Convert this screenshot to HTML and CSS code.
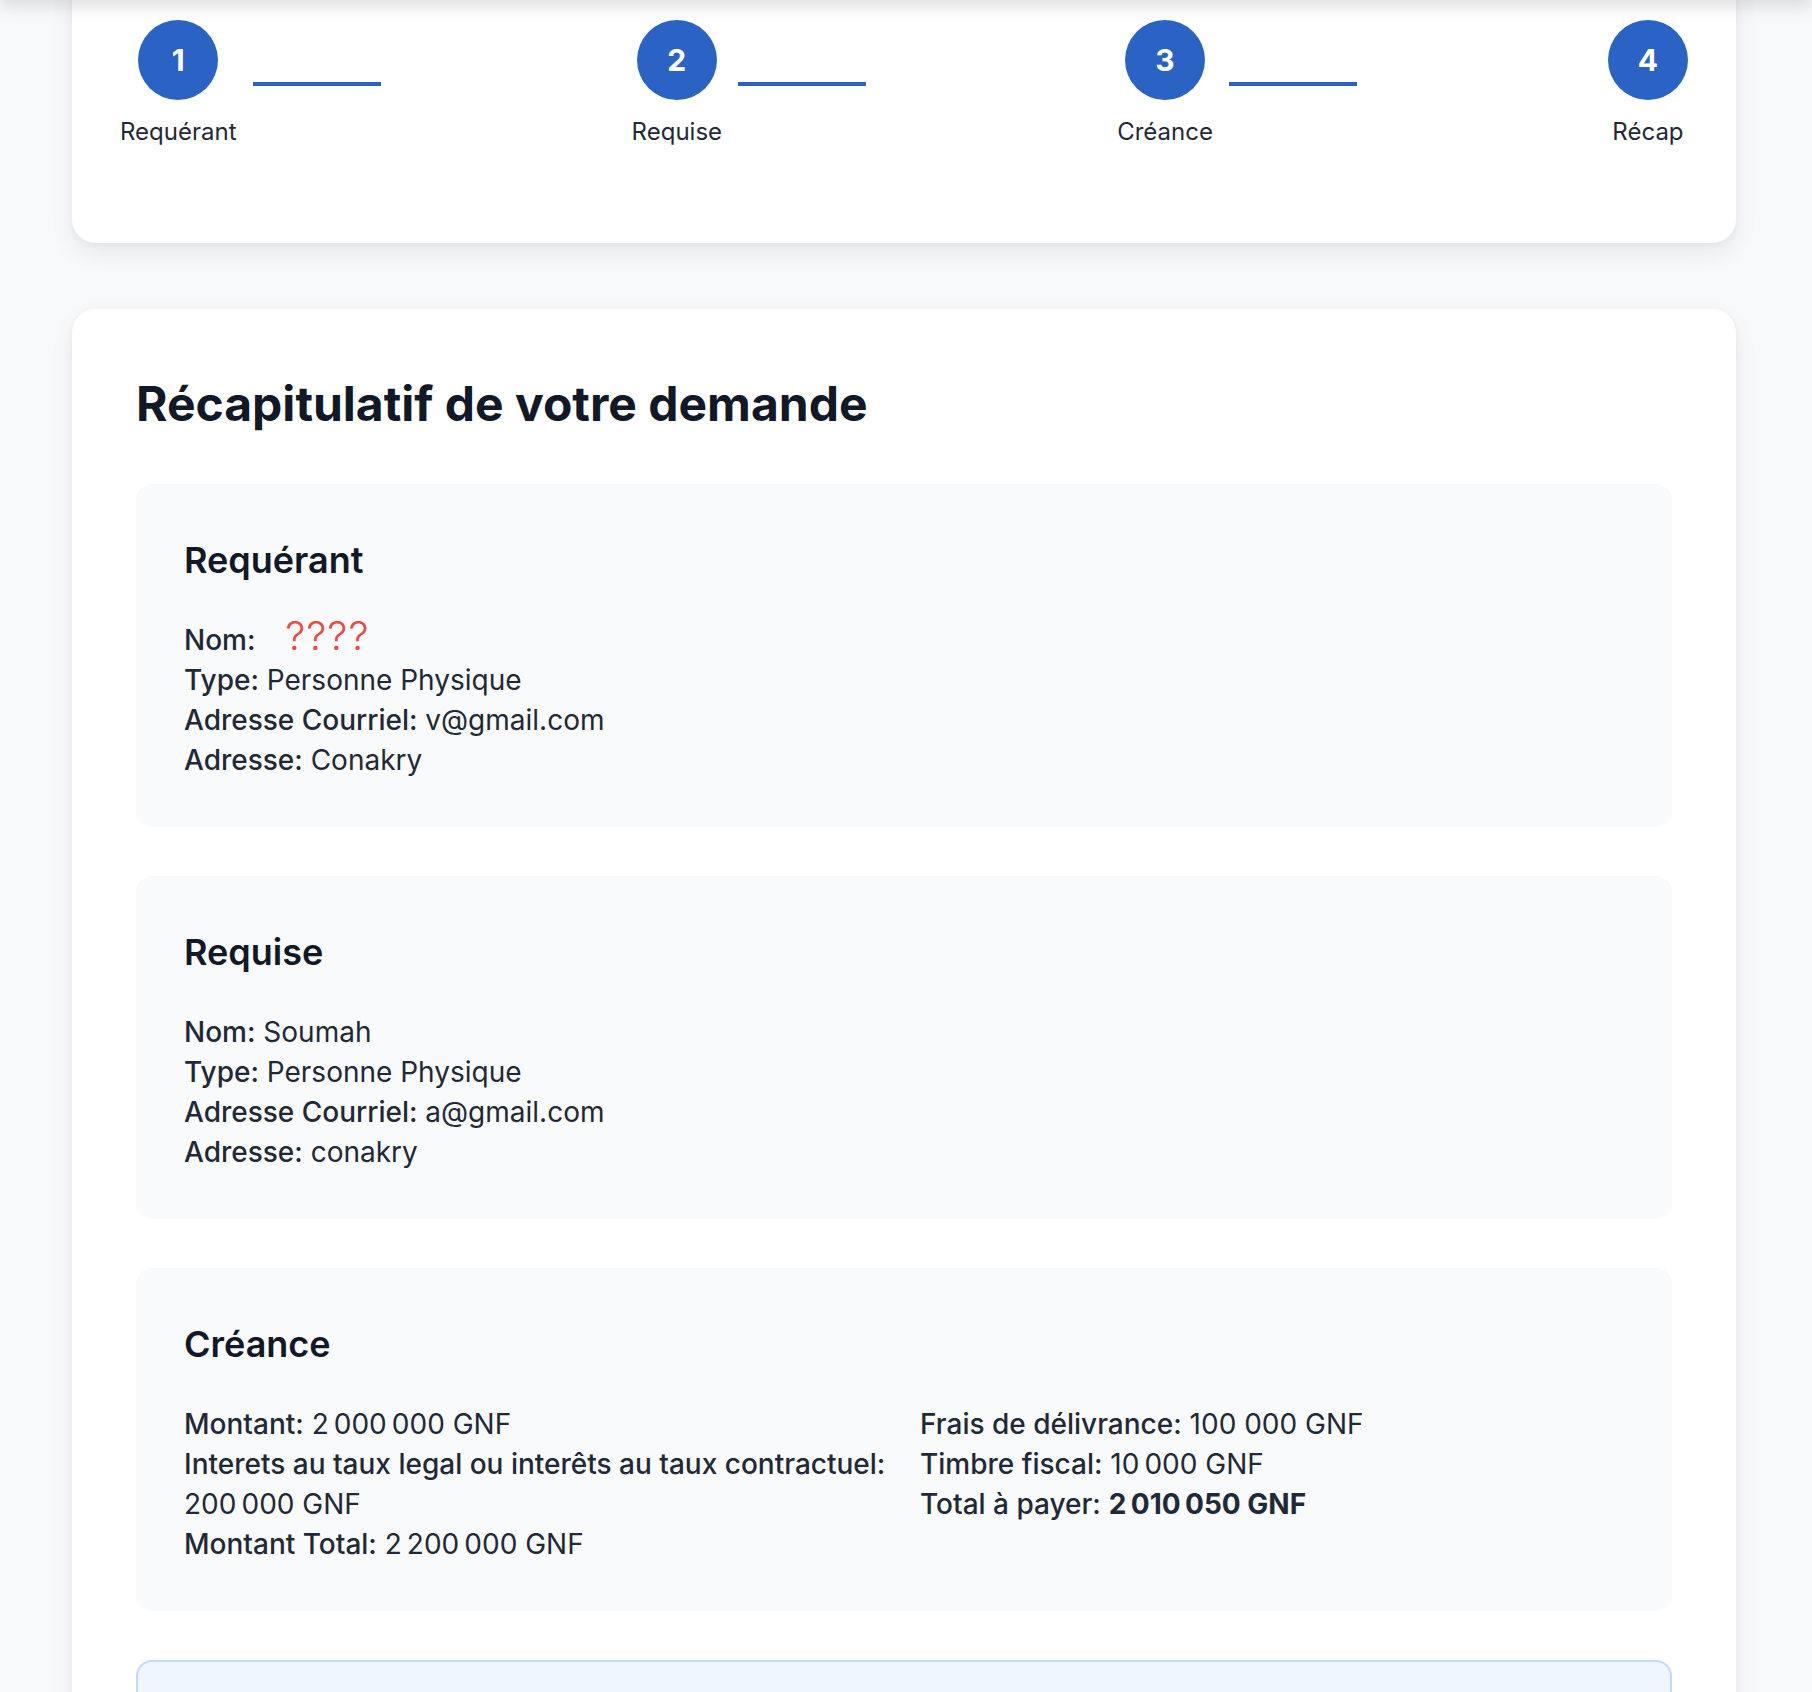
FILE: index.html
```html
<!DOCTYPE html>
<html lang="fr">
<head>
<meta charset="utf-8">
<title>Récapitulatif</title>
<link rel="stylesheet" href="styles.css">
</head>
<body>
<div class="topbar"></div>
<main class="page">
  <section class="card stepper-card">
    <div class="stepper">
      <div class="step-group">
        <div class="step"><div class="circle">1</div><div class="step-label">Requérant</div></div>
        <div class="connector"></div>
      </div>
      <div class="step-group">
        <div class="step"><div class="circle">2</div><div class="step-label">Requise</div></div>
        <div class="connector"></div>
      </div>
      <div class="step-group">
        <div class="step"><div class="circle">3</div><div class="step-label">Créance</div></div>
        <div class="connector"></div>
      </div>
      <div class="step-group">
        <div class="step"><div class="circle">4</div><div class="step-label">Récap</div></div>
      </div>
    </div>
  </section>

  <section class="card recap-card">
    <h1 class="title">Récapitulatif de votre demande</h1>

    <div class="block">
      <h2 class="block-title">Requérant</h2>
      <div class="rows">
        <p class="row"><span class="lbl">Nom:</span> <span class="missing">????</span></p>
        <p class="row"><span class="lbl">Type:</span> Personne Physique</p>
        <p class="row"><span class="lbl">Adresse Courriel:</span> v@gmail.com</p>
        <p class="row"><span class="lbl">Adresse:</span> Conakry</p>
      </div>
    </div>

    <div class="block">
      <h2 class="block-title">Requise</h2>
      <div class="rows">
        <p class="row"><span class="lbl">Nom:</span> Soumah</p>
        <p class="row"><span class="lbl">Type:</span> Personne Physique</p>
        <p class="row"><span class="lbl">Adresse Courriel:</span> a@gmail.com</p>
        <p class="row"><span class="lbl">Adresse:</span> conakry</p>
      </div>
    </div>

    <div class="block">
      <h2 class="block-title">Créance</h2>
      <div class="cols">
        <div class="rows">
          <p class="row"><span class="lbl">Montant:</span> 2&#8239;000&#8239;000 GNF</p>
          <p class="row"><span class="lbl">Interets au taux legal ou interêts au taux contractuel:</span> 200&#8239;000 GNF</p>
          <p class="row"><span class="lbl">Montant Total:</span> 2&#8239;200&#8239;000 GNF</p>
        </div>
        <div class="rows">
          <p class="row"><span class="lbl">Frais de délivrance:</span> 100 000 GNF</p>
          <p class="row"><span class="lbl">Timbre fiscal:</span> 10&#8239;000 GNF</p>
          <p class="row"><span class="lbl">Total à payer:</span> <strong class="total">2&#8239;010&#8239;050 GNF</strong></p>
        </div>
      </div>
    </div>

    <div class="notice"></div>
  </section>
</main>
</body>
</html>
```

FILE: styles.css
```css
* { box-sizing: border-box; }

html, body {
  margin: 0;
  padding: 0;
}

body {
  background: #f8f9fb;
  font-family: Inter, "Noto Sans", "Liberation Sans", sans-serif;
  color: #1f2937;
  overflow: hidden;
}

.topbar {
  position: fixed;
  top: -40px;
  left: 0;
  right: 0;
  height: 40px;
  background: #ffffff;
  box-shadow: 0 6px 18px rgba(0, 0, 0, 0.13);
  z-index: 5;
}

.page {
  width: 1664px;
  margin: 0 0 0 72px;
}

.card {
  background: #ffffff;
  border-radius: 24px;
  box-shadow: 0 10px 24px rgba(15, 23, 42, 0.07), 0 2px 8px rgba(15, 23, 42, 0.04);
}

.stepper-card {
  margin-top: -28px;
  padding: 48px 48px 95px;
}

.stepper {
  display: flex;
  justify-content: space-between;
  align-items: center;
}

.step-group {
  display: flex;
  align-items: center;
  gap: 16px;
}

.step {
  display: flex;
  flex-direction: column;
  align-items: center;
}

.circle {
  width: 80px;
  height: 80px;
  border-radius: 50%;
  background: #2b63c5;
  color: #ffffff;
  font-weight: 700;
  font-size: 30px;
  display: flex;
  align-items: center;
  justify-content: center;
}

.step-label {
  margin-top: 16px;
  font-size: 24px;
  line-height: 32px;
  color: #1f2937;
}

.connector {
  width: 128px;
  height: 4px;
  background: #2b63c5;
}

.recap-card {
  margin-top: 66px;
  padding: 64px 64px 0;
  min-height: 1500px;
}

.title {
  margin: 0 0 50px;
  font-size: 48px;
  line-height: 61px;
  font-weight: 700;
  color: #111827;
}

.block {
  background: #f9fafb;
  border-radius: 16px;
  padding: 48px 48px 47px;
  margin-bottom: 49px;
}

.block-title {
  margin: 0 0 32px;
  font-size: 36px;
  line-height: 56px;
  font-weight: 600;
  color: #111827;
}

.rows p {
  margin: 0;
}

.row {
  font-size: 28px;
  line-height: 40px;
  color: #1f2937;
}

.lbl {
  font-weight: 500;
}

.missing {
  display: inline-block;
  margin-left: 22px;
  font-size: 40px;
  line-height: 30px;
  font-weight: 300;
  color: #ea4a3f;
  letter-spacing: 1px;
}

.total {
  font-weight: 700;
}

.cols {
  display: grid;
  grid-template-columns: 1fr 1fr;
  gap: 32px;
}

.notice {
  height: 120px;
  background: #eff6ff;
  border: 2px solid #bfdbfe;
  border-radius: 16px;
}
```
